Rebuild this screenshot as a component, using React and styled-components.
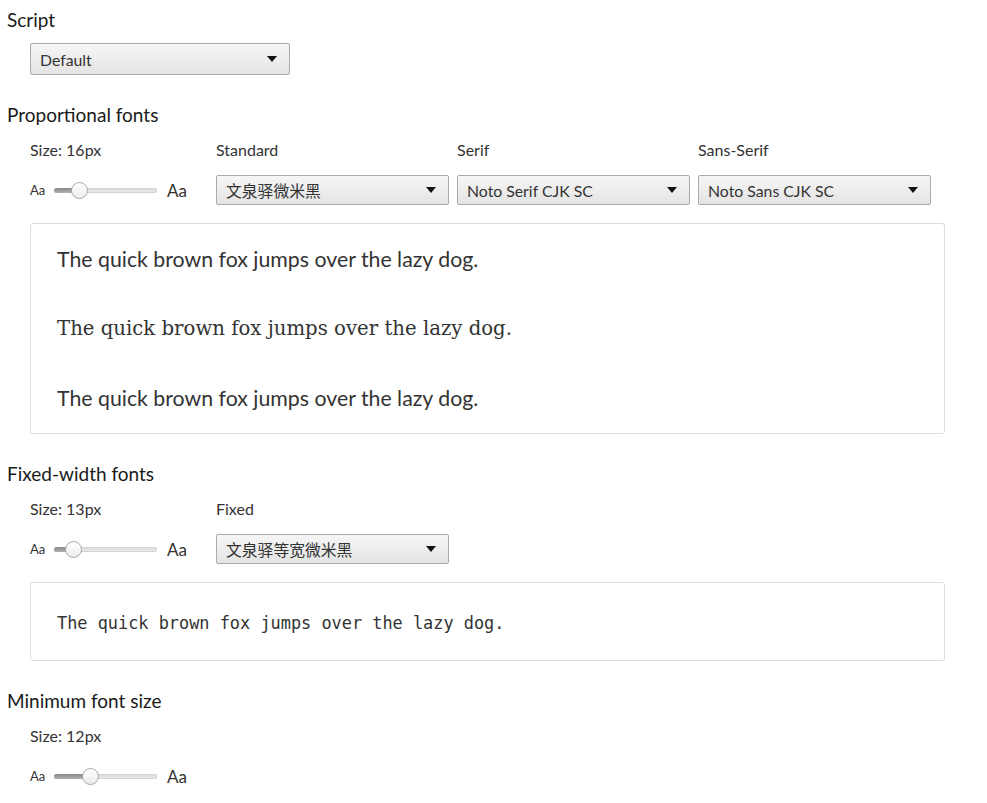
import React from 'react';
import styled, { createGlobalStyle } from 'styled-components';

const GlobalStyle = createGlobalStyle`
  body {
    margin: 0;
    background: #fff;
    font-family: Lato, "Noto Sans CJK SC", sans-serif;
    color: #333;
  }
`;

const Page = styled.div`
  padding: 8px 7px;
`;

const Heading = styled.h2`
  margin: 0;
  font-size: 19px;
  font-weight: 400;
  line-height: 24px;
  color: #1a1a1a;
`;

const Section = styled.section`
  margin-top: ${props => props.first ? '0' : '28px'};
`;

const Body = styled.div`
  padding-left: 23px;
`;

const Grid = styled.div`
  display: grid;
  grid-template-columns: 178px repeat(${props => props.cols}, 233px);
  column-gap: 8px;
  row-gap: 15px;
  margin-top: 13px;
`;

const Label = styled.div`
  font-size: 16px;
  line-height: 20px;
  color: #333;
`;

const SelectBox = styled.div`
  display: flex;
  align-items: center;
  justify-content: space-between;
  box-sizing: border-box;
  width: ${props => props.width || '100%'};
  height: ${props => props.height || 30}px;
  padding: 0 12px 0 9px;
  border: 1px solid #aaa;
  border-radius: 2px;
  background: linear-gradient(#f6f6f6, #e4e4e4);
  font-size: 15.8px;
  color: #333;
  margin-top: ${props => props.top || 0}px;
`;

const Arrow = styled.span`
  width: 0;
  height: 0;
  border-left: 5px solid transparent;
  border-right: 5px solid transparent;
  border-top: 6px solid #111;
`;

const Select = ({ value, ...rest }) => (
  <SelectBox {...rest}>
    <span>{value}</span>
    <Arrow />
  </SelectBox>
);

const SliderRow = styled.div`
  display: flex;
  align-items: center;
  height: 30px;
`;

const Small = styled.span`
  font-size: 13px;
  color: #333;
  width: 24px;
`;

const Big = styled.span`
  font-size: 17px;
  color: #333;
  margin-left: 10px;
`;

const Track = styled.div`
  position: relative;
  width: 103px;
  height: 5px;
  border-radius: 3px;
  background: linear-gradient(#d8d8d8, #ececec);
  box-shadow: inset 0 0 0 1px #d4d4d4;
`;

const Fill = styled.div`
  height: 100%;
  border-radius: 3px 0 0 3px;
  background: linear-gradient(#888, #b0b0b0);
`;

const Thumb = styled.div`
  position: absolute;
  top: 50%;
  width: 15px;
  height: 15px;
  margin: -8.5px 0 0 -8.5px;
  border-radius: 50%;
  border: 1px solid #a8a8a8;
  background: linear-gradient(#fff, #ececec);
`;

const Slider = ({ pos }) => (
  <SliderRow>
    <Small>Aa</Small>
    <Track>
      <Fill style={{ width: pos }} />
      <Thumb style={{ left: pos }} />
    </Track>
    <Big>Aa</Big>
  </SliderRow>
);

const Preview = styled.div`
  box-sizing: border-box;
  width: 915px;
  margin-top: 18px;
  padding: ${props => props.pad || '0 26px 2px'};
  border: 1px solid #dcdcdc;
  border-radius: 3px;
`;

const Sample = styled.div`
  height: ${props => props.h}px;
  display: flex;
  align-items: center;
  font-family: ${props => props.font};
  font-size: ${props => props.size}px;
  color: #333;
`;

const SAMPLE = 'The quick brown fox jumps over the lazy dog.';

const App = () => (
  <Page>
    <GlobalStyle />
    <Section first>
      <Heading>Script</Heading>
      <Body>
        <Select value="Default" width="260px" height={32} top={11} />
      </Body>
    </Section>

    <Section>
      <Heading>Proportional fonts</Heading>
      <Body>
        <Grid cols={3}>
          <Label>Size: 16px</Label>
          <Label>Standard</Label>
          <Label>Serif</Label>
          <Label>Sans-Serif</Label>
          <Slider pos="25px" />
          <Select value="文泉驿微米黑" />
          <Select value="Noto Serif CJK SC" />
          <Select value="Noto Sans CJK SC" />
        </Grid>
        <Preview>
          <Sample h={69} size={21.3} font='Lato, "Noto Sans CJK SC", sans-serif'>{SAMPLE}</Sample>
          <Sample h={71} size={19.7} font='"DejaVu Serif", "Noto Serif CJK SC", serif'>{SAMPLE}</Sample>
          <Sample h={67} size={21.3} font='Lato, "Noto Sans CJK SC", sans-serif'>{SAMPLE}</Sample>
        </Preview>
      </Body>
    </Section>

    <Section>
      <Heading>Fixed-width fonts</Heading>
      <Body>
        <Grid cols={1}>
          <Label>Size: 13px</Label>
          <Label>Fixed</Label>
          <Slider pos="19px" />
          <Select value="文泉驿等宽微米黑" />
        </Grid>
        <Preview pad="2px 26px 0">
          <Sample h={75} size={16.9} font='"DejaVu Sans Mono", monospace'>{SAMPLE}</Sample>
        </Preview>
      </Body>
    </Section>

    <Section>
      <Heading>Minimum font size</Heading>
      <Body>
        <Grid cols={0}>
          <Label>Size: 12px</Label>
          <Slider pos="36px" />
        </Grid>
      </Body>
    </Section>
  </Page>
);

export default App;
